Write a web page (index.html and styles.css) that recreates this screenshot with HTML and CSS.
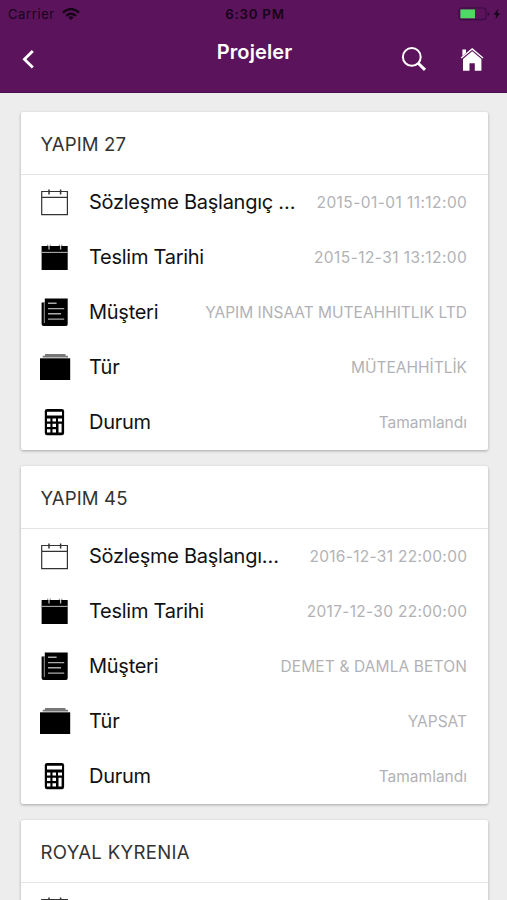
FILE: index.html
```html
<!DOCTYPE html>
<html lang="tr">
<head>
<meta charset="utf-8">
<meta name="viewport" content="width=device-width">
<title>Projeler</title>
<link rel="stylesheet" href="styles.css">
</head>
<body>
<svg class="defs" aria-hidden="true">
  <symbol id="calendar" viewBox="0 0 32 31">
    <path d="M2.7 4.5H28.4V27.6H2.7ZM2.7 10.4H28.4" fill="none" stroke="#333" stroke-width="1.2"/>
    <path d="M10 2.4V7.4M21.6 2.4V7.4" stroke="#333" stroke-width="1.5"/>
  </symbol>
  <symbol id="calendar-full" viewBox="0 0 32 31">
    <path d="M2.6 4H28.7V28H2.6Z"/>
    <path d="M2.6 10.4H28.7" stroke="#aaa" stroke-width="1.1"/>
    <path d="M10 4V7.5M21.6 4V7.5" stroke="#bbb" stroke-width="1.3"/>
    <path d="M8.7 2.6V4M11.2 2.6V4M20.3 2.6V4M22.8 2.6V4" stroke="#666" stroke-width=".8"/>
  </symbol>
  <symbol id="paper" viewBox="0 0 32 31">
    <path d="M5.8 1.4H28.7V27.2Q28.7 29 27 29H4.6Q2.6 29 2.6 27V5.6H5.8Z"/>
    <path d="M5.3 5.6V26" stroke="#999" stroke-width="1"/>
    <path d="M9 6.3H17.6M9 11.6H25.2M9 16.8H22M9 22.1H25.2" stroke="#aaa" stroke-width="1.4"/>
  </symbol>
  <symbol id="albums" viewBox="0 0 32 31">
    <path d="M1 6.3H31.2V28H1Z"/>
    <path d="M3.7 4.6H29M6 2.8H26.5" stroke="#777" stroke-width="1.7"/>
  </symbol>
  <symbol id="calculator" viewBox="0 0 32 31">
    <rect x="5.8" y="2" width="19.3" height="26.2" rx="2.3"/>
    <path d="M8 4.8H23V8.6H8ZM8 11.5H11.4V14.5H8ZM13.5 11.5H17V14.5H13.5ZM19 11.5H23V14.5H19ZM8 16.8H11.4V20H8ZM13.5 16.8H17V20H13.5ZM8 22.2H11.4V25.4H8ZM13.5 22.2H17V25.4H13.5ZM19.5 16.8H22.6V25.4H19.5Z" fill="#fff"/>
  </symbol>
</svg>

<header class="header">
  <div class="status">
    <div class="carrier"><span class="carrier-name">Carrier</span>
      <svg width="18" height="12" viewBox="0 0 18 12"><g fill="none" stroke="#160418" stroke-width="2.3"><path d="M.9 4.5Q9-2.4 17.1 4.5"/><path d="M4 7.8Q9 3.7 14 7.8"/></g><path d="M6.3 9.4Q9 7.3 11.7 9.4L9 12Z" fill="#160418"/></svg>
    </div>
    <div class="time">6:30 PM</div>
    <div class="power">
      <svg width="44" height="14" viewBox="0 0 44 14"><rect x="1" y="1" width="27" height="11.6" rx="2.5" fill="none" stroke="#3a0b40" stroke-width="1.1"/><path d="M2.4 2.4H17V11.3H2.4Z" fill="#4fd865"/><path d="M29.7 5V9Q31.2 8.4 31.2 7T29.7 5Z" fill="#2d0732"/><path d="M40.2 1.8L35.6 7.8H38.5L37.4 12.5L42 6.2H39.2Z" fill="#160418"/></svg>
    </div>
  </div>
  <nav class="toolbar">
    <svg class="back" width="14" height="20" viewBox="0 0 14 20"><path d="M11.8 1.9L3.4 10.2L11.8 18.5" fill="none" stroke="#fff" stroke-width="2.8"/></svg>
    <h1 class="title">Projeler</h1>
    <svg class="search" width="26" height="26" viewBox="0 0 26 26"><circle cx="10.8" cy="10.9" r="8.9" fill="none" stroke="#fff" stroke-width="2"/><path d="M17 17L24 23.8" stroke="#fff" stroke-width="3"/></svg>
    <svg class="home" width="24" height="26" viewBox="0 0 24 26"><path d="M3 13L12.2 5.2L21.4 13V24.8H14.8V17.2H9.5V24.8H3Z" fill="#fff"/><path d="M1.2 12L12.2 2.9L23 12" fill="none" stroke="#fff" stroke-width="1.4"/><path d="M2.4 3.6H6V7L2.4 10Z" fill="#fff"/></svg>
  </nav>
</header>

<main class="list">
  <section class="card">
    <h2 class="name">YAPIM 27</h2>
    <div class="row"><svg class="icon"><use href="#calendar"/></svg><span class="label">Sözleşme Başlangıç Tarihi</span><span class="value date narrow">2015-01-01 11:12:00</span></div>
    <div class="row"><svg class="icon"><use href="#calendar-full"/></svg><span class="label">Teslim Tarihi</span><span class="value date narrow">2015-12-31 13:12:00</span></div>
    <div class="row"><svg class="icon"><use href="#paper"/></svg><span class="label">Müşteri</span><span class="value">YAPIM INSAAT MUTEAHHITLIK LTD</span></div>
    <div class="row"><svg class="icon"><use href="#albums"/></svg><span class="label">Tür</span><span class="value">MÜTEAHHİTLİK</span></div>
    <div class="row"><svg class="icon"><use href="#calculator"/></svg><span class="label">Durum</span><span class="value">Tamamlandı</span></div>
  </section>
  <section class="card">
    <h2 class="name">YAPIM 45</h2>
    <div class="row"><svg class="icon"><use href="#calendar"/></svg><span class="label">Sözleşme Başlangıç Tarihi</span><span class="value date">2016-12-31 22:00:00</span></div>
    <div class="row"><svg class="icon"><use href="#calendar-full"/></svg><span class="label">Teslim Tarihi</span><span class="value date">2017-12-30 22:00:00</span></div>
    <div class="row"><svg class="icon"><use href="#paper"/></svg><span class="label">Müşteri</span><span class="value loose">DEMET &amp; DAMLA BETON</span></div>
    <div class="row"><svg class="icon"><use href="#albums"/></svg><span class="label">Tür</span><span class="value">YAPSAT</span></div>
    <div class="row"><svg class="icon"><use href="#calculator"/></svg><span class="label">Durum</span><span class="value">Tamamlandı</span></div>
  </section>
  <section class="card">
    <h2 class="name loose">ROYAL KYRENIA</h2>
    <div class="row"><svg class="icon"><use href="#calendar"/></svg></div>
  </section>
</main>
</body>
</html>
```
FILE: styles.css
```css
* { box-sizing: border-box; }
body {
  margin: 0;
  height: 900px;
  overflow: hidden;
  display: flex;
  flex-direction: column;
  background: #ededed;
  font-family: Inter, "Liberation Sans", sans-serif;
}
svg { display: block; flex: none; }
.defs { display: none; }
.header {
  flex: none;
  height: 93px;
  background: #5b145b;
  border-bottom: 1px solid #4c0f4d;
}
.status {
  height: 27px;
  padding: 0 5px 0 8px;
  display: grid;
  grid-template-columns: 1fr auto 1fr;
  align-items: center;
  color: #160418;
  font-size: 13px;
}
.carrier { display: flex; align-items: center; gap: 7px; }
.carrier-name { letter-spacing: .6px; }
.time { font-weight: 600; font-size: 13.3px; letter-spacing: .75px; }
.power { display: flex; justify-content: flex-end; }
.toolbar { display: flex; height: 65px; padding: 0 23px 0 21px; }
.back { margin-top: 22px; }
.title {
  flex: 1;
  margin: 11px 0 0 36px;
  padding-left: 37px;
  text-align: center;
  font-size: 20px;
  line-height: 28px;
  font-weight: 600;
  letter-spacing: .1px;
  color: #fff;
}
.search { margin-top: 19px; margin-right: 33px; }
.home { margin-top: 19px; }
.list {
  padding: 19px 19.5px 0 20.5px;
  display: flex;
  flex-direction: column;
  gap: 16px;
}
.card {
  flex: none;
  background: #fff;
  border-radius: 2px;
  box-shadow: 0 1px 3px rgba(0, 0, 0, .3);
}
.name {
  margin: 0;
  height: 63px;
  padding: 0 20px;
  border-bottom: 1px solid #e4e4e4;
  font-size: 18.6px;
  line-height: 64px;
  font-weight: 400;
  letter-spacing: .1px;
  color: #333;
}
.name.loose { letter-spacing: .3px; }
.row {
  height: 55px;
  padding: 0 20.5px 0 18.5px;
  display: flex;
  align-items: center;
}
.icon { width: 32px; height: 31px; margin-right: 18px; }
.label {
  flex: 1;
  min-width: 0;
  margin: 0 20px 1px 0;
  overflow: hidden;
  white-space: nowrap;
  text-overflow: ellipsis;
  font-size: 20px;
  line-height: 30px;
  letter-spacing: -.27px;
  color: #111;
}
.value {
  font-size: 15.5px;
  white-space: nowrap;
  color: #b2b2b6;
}
.value.loose { letter-spacing: .12px; }
.date { letter-spacing: .3px; margin-right: -.3px; }
.date.narrow { letter-spacing: .43px; }
```
